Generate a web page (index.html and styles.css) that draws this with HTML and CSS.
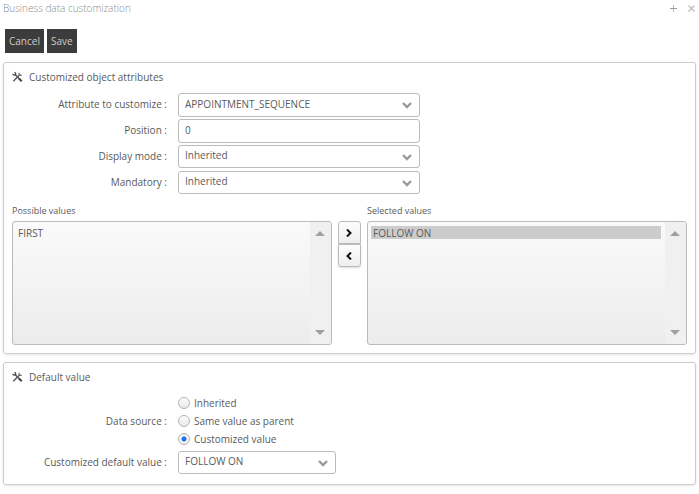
FILE: index.html
```
<!DOCTYPE html>
<html lang="en">

<head>
    <meta charset="UTF-8">
    <title>Business data customization</title>
    <link rel="stylesheet" href="styles.css">
</head>

<body>
    <svg class="defs" width="0" height="0" aria-hidden="true">
        <symbol id="tools" viewBox="0 0 12 12">
            <path d="M3 3 L9 9" stroke="#555" stroke-width="1.6" fill="none" />
            <path d="M.6 2.6 L2 4 L4 3.6 L4 2 L2.8 .8" stroke="#444" stroke-width="1.3" fill="none" />
            <path d="M1.4 10.6 L9 3" stroke="#555" stroke-width="1.5" fill="none" />
            <path d="M7.6 1.4 L8 4 L10.8 4.4" stroke="#777" stroke-width="1.3" fill="none" />
            <path d="M7.6 7.6 L10.6 10.6" stroke="#444" stroke-width="2.2" fill="none" />
        </symbol>
        <symbol id="chevron" viewBox="0 0 10 7">
            <path d="M1 1 L5 5 L9 1" stroke="#999" stroke-width="2.4" fill="none" />
        </symbol>
        <symbol id="up" viewBox="0 0 10 5">
            <path d="M0 5 L5 0 L10 5 Z" fill="#a0a0a0" />
        </symbol>
        <symbol id="down" viewBox="0 0 10 5">
            <path d="M0 0 L10 0 L5 5 Z" fill="#a0a0a0" />
        </symbol>
    </svg>

    <header class="titlebar">
        <h1>Business data customization</h1>
        <div class="window-tools">
            <button type="button" aria-label="Expand">
                <svg width="7" height="7" viewBox="0 0 7 7"><path d="M3.5 0 V7" stroke="#d4b48c" /><path d="M0 3.5 H7" stroke="#999" /></svg>
            </button>
            <button type="button" aria-label="Close">
                <svg width="7" height="7" viewBox="0 0 7 7"><path d="M.5 .5 L6.5 6.5 M6.5 .5 L.5 6.5" stroke="#bbb" stroke-width="1.3" /></svg>
            </button>
        </div>
    </header>

    <form>
        <div class="actions">
            <button type="button">Cancel</button>
            <button type="button">Save</button>
        </div>

        <section class="panel">
            <h2><svg width="11" height="12"><use href="#tools" /></svg>Customized object attributes</h2>
            <div class="fields">
                <label for="attribute">Attribute to customize :</label>
                <div class="dropdown">
                    <select id="attribute" class="tall"><option>APPOINTMENT_SEQUENCE</option></select>
                    <svg width="10" height="7"><use href="#chevron" /></svg>
                </div>
                <label for="position">Position :</label>
                <input id="position" class="tall" type="text" value="0">
                <label for="mode">Display mode :</label>
                <div class="dropdown">
                    <select id="mode"><option>Inherited</option></select>
                    <svg width="10" height="7"><use href="#chevron" /></svg>
                </div>
                <label for="mandatory">Mandatory :</label>
                <div class="dropdown">
                    <select id="mandatory"><option>Inherited</option></select>
                    <svg width="10" height="7"><use href="#chevron" /></svg>
                </div>
            </div>

            <div class="transfer">
                <div class="values">
                    <label for="possible">Possible values</label>
                    <div class="listbox">
                        <select id="possible" multiple><option>FIRST</option></select>
                        <div class="track">
                            <svg width="10" height="5"><use href="#up" /></svg>
                            <svg width="10" height="5"><use href="#down" /></svg>
                        </div>
                    </div>
                </div>
                <div class="movers">
                    <button type="button" aria-label="Add">
                        <svg width="6" height="8" viewBox="0 0 6 8"><path d="M1 .5 L4.5 4 L1 7.5" stroke="#111" stroke-width="2" fill="none" /></svg>
                    </button>
                    <button type="button" aria-label="Remove">
                        <svg width="6" height="8" viewBox="0 0 6 8"><path d="M5 .5 L1.5 4 L5 7.5" stroke="#111" stroke-width="2" fill="none" /></svg>
                    </button>
                </div>
                <div class="values">
                    <label for="selected">Selected values</label>
                    <div class="listbox">
                        <select id="selected" multiple><option class="current">FOLLOW ON</option></select>
                        <div class="track">
                            <svg width="10" height="5"><use href="#up" /></svg>
                            <svg width="10" height="5"><use href="#down" /></svg>
                        </div>
                    </div>
                </div>
            </div>
        </section>

        <section class="panel">
            <h2><svg width="11" height="12"><use href="#tools" /></svg>Default value</h2>
            <div class="fields sources">
                <span id="source-label" class="name">Data source :</span>
                <div class="radios" role="radiogroup" aria-labelledby="source-label">
                    <label><input type="radio" name="source">Inherited</label>
                    <label><input type="radio" name="source">Same value as parent</label>
                    <label><input type="radio" name="source" checked>Customized value</label>
                </div>
                <label for="default">Customized default value :</label>
                <div class="dropdown short">
                    <select id="default"><option>FOLLOW ON</option></select>
                    <svg width="10" height="7"><use href="#chevron" /></svg>
                </div>
            </div>
        </section>
    </form>
</body>

</html>
```
FILE: styles.css
```
* {
    box-sizing: border-box;
    margin: 0;
    padding: 0;
}

body {
    padding: 0 3px;
    background: #fff;
    color: #5a5a5a;
    font: 10px/16px "Open Sans", "Noto Sans", sans-serif;
}

button,
input,
select {
    font: inherit;
    color: inherit;
}

.defs {
    position: absolute;
}

.titlebar {
    display: flex;
    justify-content: space-between;
    align-items: center;
    height: 16px;
    color: #8c8c8c;
}

.titlebar h1 {
    font-size: 10px;
    font-weight: 300;
}

.window-tools {
    display: flex;
    gap: 11px;
    padding-right: 1px;
}

.window-tools button {
    display: flex;
    border: 0;
    background: none;
}

.actions {
    display: flex;
    gap: 3px;
    padding: 13px 2px 9px;
}

.actions button {
    height: 24px;
    padding: 0 4px;
    border: 0;
    background: #3c3c3c;
    color: #ccc;
}

.panel {
    margin-bottom: 8px;
    padding: 6px 8px 8px;
    border: 1px solid #ccc;
    border-radius: 3px;
    box-shadow: 0 1px 3px rgba(0, 0, 0, 0.1);
}

.panel h2 {
    display: flex;
    align-items: center;
    gap: 6px;
    font-size: 10px;
    font-weight: 400;
}

/* label / control rows */
.fields {
    display: grid;
    grid-template-columns: 155px minmax(0, 242px);
    grid-auto-rows: 26px;
    column-gap: 11px;
    padding-top: 8px;
}

.fields > label,
.name {
    padding-top: 3px;
    text-align: right;
}

.dropdown {
    position: relative;
}

.dropdown svg {
    position: absolute;
    right: 8px;
    top: 9px;
    pointer-events: none;
}

.short {
    width: 158px;
}

.dropdown select,
.fields > input {
    appearance: none;
    display: block;
    width: 100%;
    height: 23px;
    padding: 0 6px 3px;
    border: 1px solid #bbb;
    border-radius: 3px;
    background: #fff;
}

.fields .tall {
    height: 24px;
    padding-bottom: 2px;
}

/* value lists */
.transfer {
    display: grid;
    grid-template-columns: 1fr 23px 1fr;
    gap: 6px;
    padding-top: 6px;
}

.values > label {
    display: block;
    height: 18px;
    font-size: 9px;
}

.listbox {
    display: flex;
    height: 124px;
    border: 1px solid #bbb;
    border-radius: 3px;
    background: linear-gradient(#fafafa, #ececec);
    overflow: hidden;
}

.listbox select {
    flex: 1;
    min-width: 0;
    padding: 4px 4px 4px 3px;
    border: 0;
    background: none;
    overflow: hidden;
    outline: 0;
}

.listbox option {
    height: 13px;
    min-height: 0;
    padding: 0 2px;
    line-height: 11px;
}

.listbox .current {
    background: #ccc;
}

.track {
    display: flex;
    flex-direction: column;
    justify-content: space-between;
    width: 21px;
    padding: 9px 5px;
    background: #f0f0f0;
}

.movers {
    padding-top: 18px;
}

.movers button {
    display: flex;
    justify-content: center;
    align-items: center;
    width: 100%;
    height: 23px;
    padding-right: 2px;
    border: 1px solid #bbb;
    border-radius: 3px 3px 0 0;
    background: linear-gradient(#fdfdfd, #eee);
}

.movers button + button {
    border-radius: 0 0 3px 3px;
    box-shadow: 0 1px 2px rgba(0, 0, 0, 0.15);
}

/* default value */
.sources {
    grid-auto-rows: auto;
    padding-top: 9px;
}

.sources .name {
    align-self: center;
    padding: 0 0 4px;
}

.radios {
    padding-bottom: 3px;
}

.radios label {
    display: flex;
    align-items: center;
    gap: 4px;
    height: 18px;
}

.radios input {
    appearance: none;
    width: 12px;
    height: 12px;
    border: 1px solid #b4b4b4;
    border-radius: 50%;
    background: linear-gradient(#fff, #e8e8e8);
}

.radios input:checked {
    background: radial-gradient(circle, #1a73e8 2px, #f4f4f4 3px);
}

.sources .dropdown {
    padding-bottom: 2px;
}
```
